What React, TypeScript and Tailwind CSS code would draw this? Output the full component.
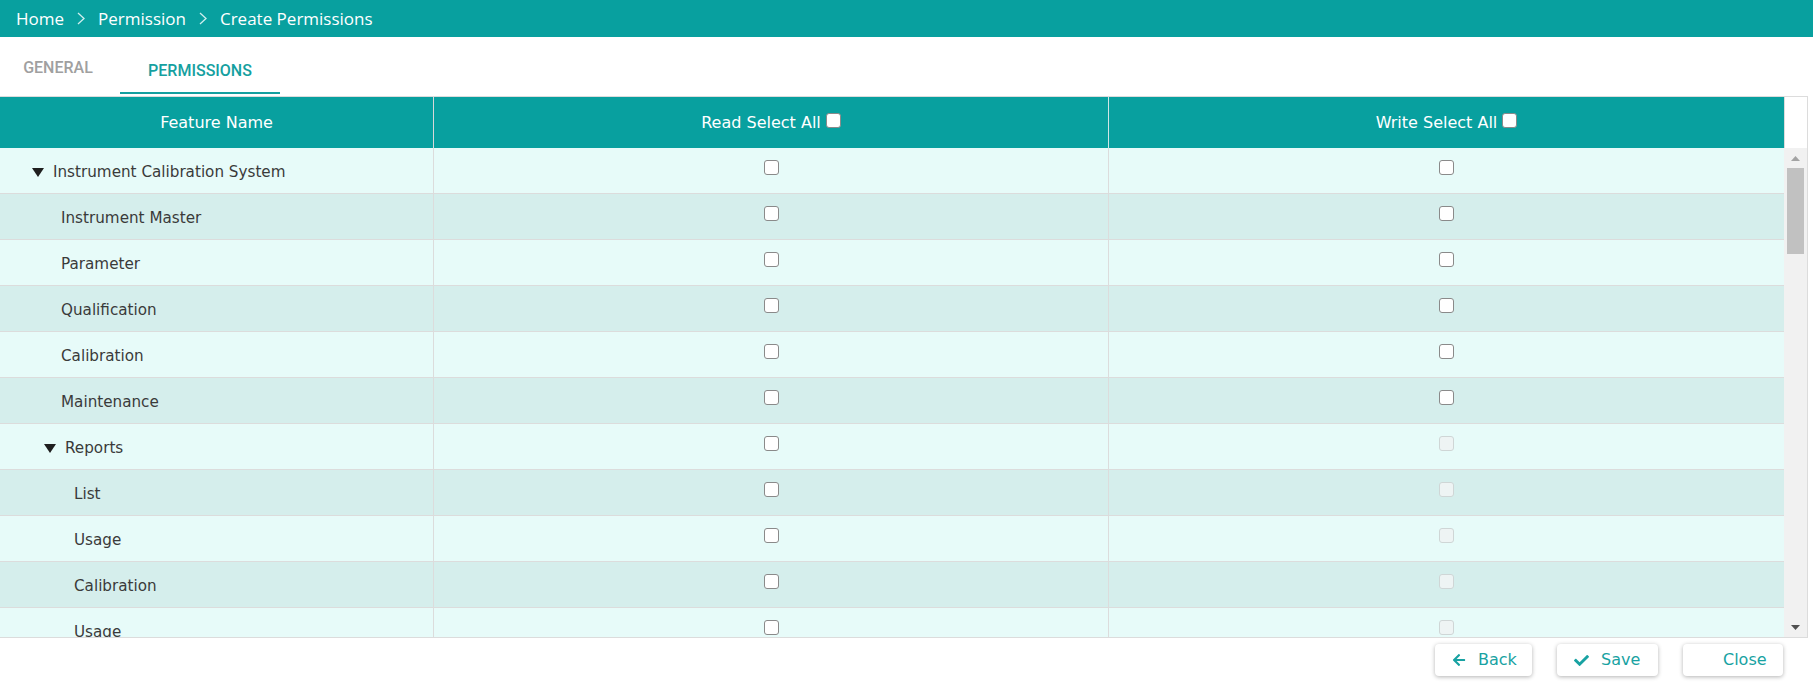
import React from "react";
import { FaArrowLeft, FaCheck } from "react-icons/fa";

type Row = {
  label: string;
  level: 1 | 2 | 3;
  toggle?: boolean;
  writeDisabled?: boolean;
};

const rows: Row[] = [
  { label: "Instrument Calibration System", level: 1, toggle: true },
  { label: "Instrument Master", level: 2 },
  { label: "Parameter", level: 2 },
  { label: "Qualification", level: 2 },
  { label: "Calibration", level: 2 },
  { label: "Maintenance", level: 2 },
  { label: "Reports", level: 2, toggle: true, writeDisabled: true },
  { label: "List", level: 3, writeDisabled: true },
  { label: "Usage", level: 3, writeDisabled: true },
  { label: "Calibration", level: 3, writeDisabled: true },
  { label: "Usage", level: 3, writeDisabled: true },
];

function Box({ disabled }: { disabled?: boolean }) {
  return (
    <span
      className={
        disabled
          ? "block w-[15px] h-[15px] rounded-[3px] border border-[#cfd6d6] bg-[#eef4f4]"
          : "block w-[15px] h-[15px] rounded-[3px] border border-[#8a8a8a] bg-white"
      }
    />
  );
}

function Tri() {
  return (
    <svg width="12" height="10" viewBox="0 0 12 10" className="shrink-0">
      <polygon points="0,0 12,0 6,9" fill="#1f1f1f" />
    </svg>
  );
}

function FeatureCell({ row }: { row: Row }) {
  let pl = "pl-[61px]";
  if (row.level === 1) pl = "pl-[32px]";
  else if (row.level === 2 && row.toggle) pl = "pl-[44px]";
  else if (row.level === 3) pl = "pl-[74px]";
  return (
    <div className={`w-[434px] shrink-0 h-full flex items-center pt-[4px] ${pl} border-r border-[#dcdcdc]`}>
      {row.toggle && (
        <span className="mr-[9px] flex items-center">
          <Tri />
        </span>
      )}
      <span>{row.label}</span>
    </div>
  );
}

export default function App() {
  return (
    <div
      className="w-[1813px] h-[682px] bg-white flex flex-col overflow-hidden"
      style={{ fontFamily: '"DejaVu Sans", Verdana, sans-serif' }}
    >
      {/* Breadcrumb bar */}
      <div
        className="h-[37px] bg-[#08a09f] flex items-center pl-[16px] text-white text-[17px] shrink-0"
        style={{ fontFamily: '"Open Sans", sans-serif' }}
      >
        <span>Home</span>
        <svg width="8" height="13" viewBox="0 0 8 13" className="mx-[13px]">
          <polyline points="1,1 7,6.5 1,12" fill="none" stroke="#cfeeee" strokeWidth="1.3" />
        </svg>
        <span>Permission</span>
        <svg width="8" height="13" viewBox="0 0 8 13" className="mx-[13px]">
          <polyline points="1,1 7,6.5 1,12" fill="none" stroke="#cfeeee" strokeWidth="1.3" />
        </svg>
        <span>Create Permissions</span>
      </div>

      {/* Tabs */}
      <div
        className="h-[59px] flex items-end shrink-0 text-[16px] font-medium"
        style={{ fontFamily: "Roboto, sans-serif" }}
      >
        <div className="w-[120px] h-full flex items-start justify-center pt-[19px] text-[#a0a0a0] pr-[4px]">
          GENERAL
        </div>
        <div className="w-[160px] h-full flex flex-col">
          <div className="flex-1 flex items-start justify-center pt-[22px] text-[#15a0a0]">PERMISSIONS</div>
          <div className="h-[2px] bg-[#15a0a0] mb-[2px]" />
        </div>
      </div>

      {/* Table */}
      <div className="w-[1808px] h-[542px] border-t border-b border-r border-[#dcdcdc] flex flex-col shrink-0">
        {/* header */}
        <div className="h-[51px] flex shrink-0 text-[16px] text-white">
          <div className="w-[1784px] bg-[#08a09f] flex">
            <div className="w-[434px] border-r border-[#d8d8d8] flex items-center justify-center">Feature Name</div>
            <div className="w-[675px] border-r border-[#cfe6e6] flex items-center justify-center">
              <span>Read Select All</span>
              <span className="ml-[5px] mb-[4px] block w-[15px] h-[15px] rounded-[3px] border border-[#8a8a8a] bg-white" />
            </div>
            <div className="flex-1 flex items-center justify-center">
              <span>Write Select All</span>
              <span className="ml-[5px] mb-[4px] block w-[15px] h-[15px] rounded-[3px] border border-[#8a8a8a] bg-white" />
            </div>
          </div>
          <div className="flex-1 border-l border-[#dcdcdc] bg-white" />
        </div>

        {/* body */}
        <div className="flex-1 flex min-h-0">
          <div className="w-[1784px] overflow-hidden text-[15.2px] text-[#3a3a3a]">
            {rows.map((row, i) => (
              <div
                key={i}
                className={`h-[46px] shrink-0 flex border-b border-[#dcdcdc] ${i % 2 === 0 ? "bg-[#e7fbf9]" : "bg-[#d5eeec]"}`}
              >
                <FeatureCell row={row} />
                <div className="w-[675px] shrink-0 h-full flex justify-center pt-[12px] border-r border-[#dcdcdc]">
                  <Box />
                </div>
                <div className="flex-1 h-full flex justify-center pt-[12px]">
                  <Box disabled={row.writeDisabled} />
                </div>
              </div>
            ))}
          </div>
          {/* scrollbar */}
          <div className="flex-1 bg-[#f1f1f1] flex flex-col items-center">
            <div className="h-[20px] w-full flex items-center justify-center">
              <svg width="9" height="5" viewBox="0 0 9 5">
                <polygon points="0,5 9,5 4.5,0" fill="#a3a3a3" />
              </svg>
            </div>
            <div className="w-[17px] h-[86px] bg-[#c1c1c1]" />
            <div className="flex-1" />
            <div className="h-[20px] w-full flex items-center justify-center">
              <svg width="9" height="5" viewBox="0 0 9 5">
                <polygon points="0,0 9,0 4.5,5" fill="#505050" />
              </svg>
            </div>
          </div>
        </div>
      </div>

      {/* Buttons */}
      <div className="flex justify-end gap-[25px] pr-[30px] pt-[6px] text-[16px] text-[#18a2a2]">
        <button className="w-[97px] h-[32px] bg-white rounded-[4px] shadow-[0_1px_4px_rgba(0,0,0,0.3)] flex items-center pl-[17px]">
          <FaArrowLeft className="w-[14px] h-[14px]" />
          <span className="ml-[12px]">Back</span>
        </button>
        <button className="w-[101px] h-[32px] bg-white rounded-[4px] shadow-[0_1px_4px_rgba(0,0,0,0.3)] flex items-center pl-[17px]">
          <FaCheck className="w-[15px] h-[15px]" />
          <span className="ml-[12px]">Save</span>
        </button>
        <button className="w-[100px] h-[32px] bg-white rounded-[4px] shadow-[0_1px_4px_rgba(0,0,0,0.3)] flex items-center pl-[40px]">
          <span>Close</span>
        </button>
      </div>
    </div>
  );
}
